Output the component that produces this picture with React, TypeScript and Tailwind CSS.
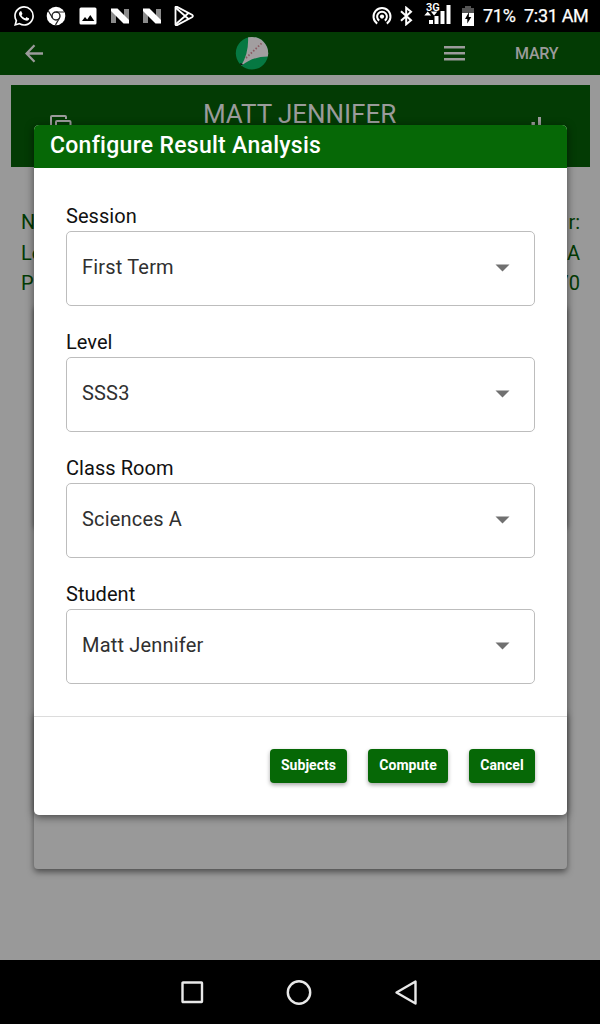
import type { ReactNode } from "react";

const fields = [
  { label: "Session", value: "First Term" },
  { label: "Level", value: "SSS3" },
  { label: "Class Room", value: "Sciences A" },
  { label: "Student", value: "Matt Jennifer" },
];

function NIcon() {
  return (
    <svg width="20" height="16" viewBox="0 0 20 16">
      <path d="M1 1h5v14H1zM14 1h5v14h-5z" fill="#8b8b8b" />
      <path d="M1 0.5h6.5L19 12v3.5h-5.5L1 3z" fill="#fff" />
    </svg>
  );
}

function StatusBar() {
  return (
    <div className="flex h-8 shrink-0 items-center justify-between bg-black pl-[14px] pr-[11px] text-white">
      <div className="flex items-center gap-[12px]">
        <svg width="20" height="20" viewBox="0 0 24 24" fill="#fff">
          <path d="M17.472 14.382c-.297-.149-1.758-.867-2.03-.967-.273-.099-.471-.148-.67.15-.197.297-.767.966-.94 1.164-.173.199-.347.223-.644.075-.297-.15-1.255-.463-2.39-1.475-.883-.788-1.48-1.761-1.653-2.059-.173-.297-.018-.458.13-.606.134-.133.298-.347.446-.52.149-.174.198-.298.298-.497.099-.198.05-.371-.025-.52-.075-.149-.669-1.612-.916-2.207-.242-.579-.487-.5-.669-.51-.173-.008-.371-.01-.57-.01-.198 0-.52.074-.792.372-.272.297-1.04 1.016-1.04 2.479 0 1.462 1.065 2.875 1.213 3.074.149.198 2.096 3.2 5.077 4.487.709.306 1.262.489 1.694.625.712.227 1.36.195 1.871.118.571-.085 1.758-.719 2.006-1.413.248-.694.248-1.289.173-1.413-.074-.124-.272-.198-.57-.347m-5.421 7.403h-.004a9.87 9.87 0 01-5.031-1.378l-.361-.214-3.741.982.998-3.648-.235-.374a9.86 9.86 0 01-1.51-5.26c.001-5.45 4.436-9.884 9.888-9.884 2.64 0 5.122 1.03 6.988 2.898a9.825 9.825 0 012.893 6.994c-.003 5.45-4.437 9.884-9.885 9.884m8.413-18.297A11.815 11.815 0 0012.05 0C5.495 0 .16 5.335.157 11.892c0 2.096.547 4.142 1.588 5.945L.057 24l6.305-1.654a11.882 11.882 0 005.683 1.448h.005c6.554 0 11.89-5.335 11.893-11.893a11.821 11.821 0 00-3.48-8.413Z" />
        </svg>
        <svg width="20" height="20" viewBox="0 0 20 20">
          <circle cx="10" cy="10" r="9.3" fill="#fff" />
          <circle cx="10" cy="10" r="4" fill="#fff" stroke="#222" strokeWidth="1.4" />
          <path d="M10 6h8.2M6.5 12L2.4 5M13.5 12L9.5 18.9" stroke="#222" strokeWidth="1.2" />
        </svg>
        <svg width="20" height="20" viewBox="0 0 20 20">
          <rect x="1.5" y="1.5" width="17" height="17" rx="1.5" fill="#fff" />
          <path d="M4 15l3-4 2.2 2.4L12.3 9l4 6z" fill="#000" />
        </svg>
        <NIcon />
        <NIcon />
        <svg width="20" height="20" viewBox="0 0 20 20" fill="none" stroke="#fff" strokeWidth="1.8" strokeLinejoin="round">
          <path d="M1.5 1.8Q1.2 .3 3 .9L18 8.7q1.8 1.3 0 2.6L3 19.1q-1.8 .6-1.5-1.2z" />
          <path d="M2 2l12.5 11M2 18L14.5 7" />
        </svg>
      </div>
      <div className="flex items-center">
        <svg width="20" height="20" viewBox="0 0 20 20" fill="none" stroke="#fff" strokeWidth="2">
          <path d="M5.2 17.6A8.5 8.5 0 1 1 14.8 17.6" />
          <path d="M7.2 14.6A4.9 4.9 0 1 1 12.8 14.6" />
          <circle cx="10" cy="10.6" r="2.1" fill="#fff" stroke="none" />
        </svg>
        <svg className="ml-[8px]" width="13" height="20" viewBox="0 0 13 20" fill="none" stroke="#fff" strokeWidth="2">
          <path d="M1 5.3l10 9-4.8 4V1.7l4.8 4-10 9" />
        </svg>
        <div className="relative ml-[11px] h-6 w-[28px]">
          <svg className="h-6 w-[28px]" viewBox="0 0 28 24" fill="#fff">
            <path d="M5 16h4v4H5zM10.5 12h4v8h-4zM16.500 7h4v13h-4zM22.500 1h4v19h-4zM.3 11.500l3.400-4 3.400 4zM6.800 7.500h6.600l-3.300 4z" />
          </svg>
          <span className="absolute -top-[3px] left-[2px] text-[11px] font-semibold leading-[13px]">3G</span>
        </div>
        <svg className="ml-[9px]" width="14" height="20" viewBox="0 0 14 20">
          <path d="M4 0h6v2h3v6H1V2h3z" fill="#555" />
          <path d="M1 7h12v13H1z" fill="#fff" />
          <path d="M8 6L4 13H6.300V17.500l4-6.500H7.800z" fill="#000" />
        </svg>
        <span className="ml-[8px] w-[41px] text-[18px] leading-8 tracking-[-0.3px] [-webkit-text-stroke:0.25px_white]">71%</span>
        <span className="w-[65px] whitespace-nowrap text-[18px] leading-8 tracking-[-0.3px] [-webkit-text-stroke:0.25px_white]">7:31 AM</span>
      </div>
    </div>
  );
}

function AppBar() {
  return (
    <header className="flex h-[43px] shrink-0 items-center bg-[#033b04] text-[#9b9b9b]">
      <svg className="ml-[25px]" width="19" height="20" viewBox="0 0 19 20" fill="none" stroke="#9b9b9b" strokeWidth="2.3">
        <path d="M18 9.500H2M9.500 1.200L1.500 9.500l8 8.300" />
      </svg>
      <svg className="ml-[191px]" width="34" height="34" viewBox="0 0 34 34">
        <defs>
          <clipPath id="logo">
            <circle cx="17" cy="16.2" r="16.2" />
          </clipPath>
        </defs>
        <g clipPath="url(#logo)">
          <path d="M0 0h34v34H0z" fill="#067842" />
          <path d="M13 0h21v19.500Q18 19 6 29Q14 16 13 0z" fill="#a29ea0" />
          <path d="M5.500 26l3 1.500-4 1z" fill="#111" />
          <path d="M11 21L27 6" stroke="#8a5b62" strokeWidth="1.8" strokeDasharray="1.5 1.8" />
        </g>
      </svg>
      <svg className="ml-[175px]" width="21" height="15" viewBox="0 0 21 15" fill="#9b9b9b">
        <path d="M0 0h21v2.500H0zM0 6h21v2.500H0zM0 12h21v2.500H0z" />
      </svg>
      <span className="ml-[50px] text-[16px] font-medium leading-5 tracking-[-0.25px]">MARY</span>
    </header>
  );
}

function InfoRow({ left, right }: { left: string; right: string }) {
  return (
    <div className="flex h-[30.5px] items-center justify-between text-[20px] text-[#033b04]">
      <span>{left}</span>
      <span>{right}</span>
    </div>
  );
}

function StudentPage() {
  return (
    <main className="flex-1 bg-[#999] pl-[11px] pr-[10px] pt-[10px]">
      <section className="flex h-[82px] justify-between bg-[#033b04] pl-[39px] pr-[43px]">
        <svg className="mt-[30px]" width="22" height="20" viewBox="0 0 22 20" fill="none" stroke="#9b9b9b" strokeWidth="2">
          <path d="M1 18V2q0-1 1-1h13q1 0 1 1v2M6 18V7q0-1 1-1h12.500q1 0 1 1v11H6" />
        </svg>
        <h1 className="mt-[14px] text-[26px] leading-[31px] tracking-[-0.05px] text-[#9b9b9b]">MATT JENNIFER</h1>
        <svg className="mt-[30px]" width="20" height="20" viewBox="0 0 20 20" fill="#9b9b9b">
          <path d="M4.500 7h3.400v12H4.500zM11 2h3v17h-3z" />
        </svg>
      </section>
      <section className="mt-10 px-[10px]">
        <InfoRow left="N" right="r:" />
        <InfoRow left="Le" right="A" />
        <InfoRow left="P" right="70" />
      </section>
      <section className="mx-[23px] mt-[6px] h-[222px] rounded bg-[#999] shadow-[0_2px_5px_rgba(0,0,0,0.45)]" />
      <section className="mx-[23px] mt-[184px] h-[158px] rounded bg-[#999] shadow-[0_3px_6px_rgba(0,0,0,0.5)]" />
    </main>
  );
}

function SelectField({ label, value }: { label: string; value: string }) {
  return (
    <div className="flex h-[126px] flex-col">
      <label className="h-[31px] text-[20px] leading-[33px] tracking-[0.05px] text-[#111]">{label}</label>
      <div className="flex h-[75px] items-center justify-between rounded-[5px] border border-[#bdbdbd] pb-[3px] pl-[15px] pr-[24px] text-[20px] tracking-[0.18px] text-[#303030]">
        <span>{value}</span>
        <svg className="mt-[2px]" width="15" height="8" viewBox="0 0 15 8">
          <path d="M.5.5h14l-7 7z" fill="#707070" />
        </svg>
      </div>
    </div>
  );
}

function ActionButton({ className, children }: { className: string; children: ReactNode }) {
  return (
    <button
      className={`h-[34px] rounded bg-[#066806] pb-[2px] text-center text-[14px] font-bold tracking-[0.05px] text-white shadow-[0_2px_4px_rgba(0,0,0,0.35)] ${className}`}
    >
      {children}
    </button>
  );
}

function ResultDialog() {
  return (
    <div
      role="dialog"
      className="absolute left-[34px] top-[125px] flex h-[690px] w-[533px] flex-col overflow-hidden rounded-[5px] bg-white"
    >
      <h2 className="h-[43px] shrink-0 bg-[#066806] pl-4 text-[23px] font-medium leading-[41px] tracking-[0.28px] text-white">
        Configure Result Analysis
      </h2>
      <div className="h-[549px] shrink-0 border-b border-[#dcdcdc] px-8 pt-[32px]">
        {fields.map((f) => (
          <SelectField key={f.label} {...f} />
        ))}
      </div>
      <div className="flex justify-end pr-8 pt-[32px]">
        <ActionButton className="w-[77px]">Subjects</ActionButton>
        <ActionButton className="ml-[21px] w-[80px]">Compute</ActionButton>
        <ActionButton className="ml-[21px] w-[66px]">Cancel</ActionButton>
      </div>
    </div>
  );
}

function SystemNav() {
  return (
    <nav className="flex h-16 shrink-0 items-center justify-center gap-[81px] bg-black pr-[2px]">
      <svg width="26" height="26" viewBox="0 0 26 26" fill="none" stroke="#e8e8e8" strokeWidth="2.4">
        <rect x="3.500" y="3.500" width="19.500" height="19.500" rx=".5" />
      </svg>
      <svg width="26" height="26" viewBox="0 0 26 26" fill="none" stroke="#e8e8e8" strokeWidth="2.4">
        <circle cx="13" cy="13.500" r="11.200" />
      </svg>
      <svg width="26" height="26" viewBox="0 0 26 26" fill="none" stroke="#e8e8e8" strokeWidth="2.4" strokeLinejoin="round">
        <path d="M22.500 2.500v22L3.500 13.500z" />
      </svg>
    </nav>
  );
}

export default function App() {
  return (
    <div className="relative flex h-[1024px] w-[600px] flex-col overflow-hidden font-['Roboto',sans-serif]">
      <StatusBar />
      <AppBar />
      <StudentPage />
      <div className="absolute left-[34px] top-[125px] h-[690px] w-[533px] rounded-[5px] shadow-[0_2px_8px_rgba(0,0,0,0.55)]" />
      <ResultDialog />
      <SystemNav />
    </div>
  );
}
